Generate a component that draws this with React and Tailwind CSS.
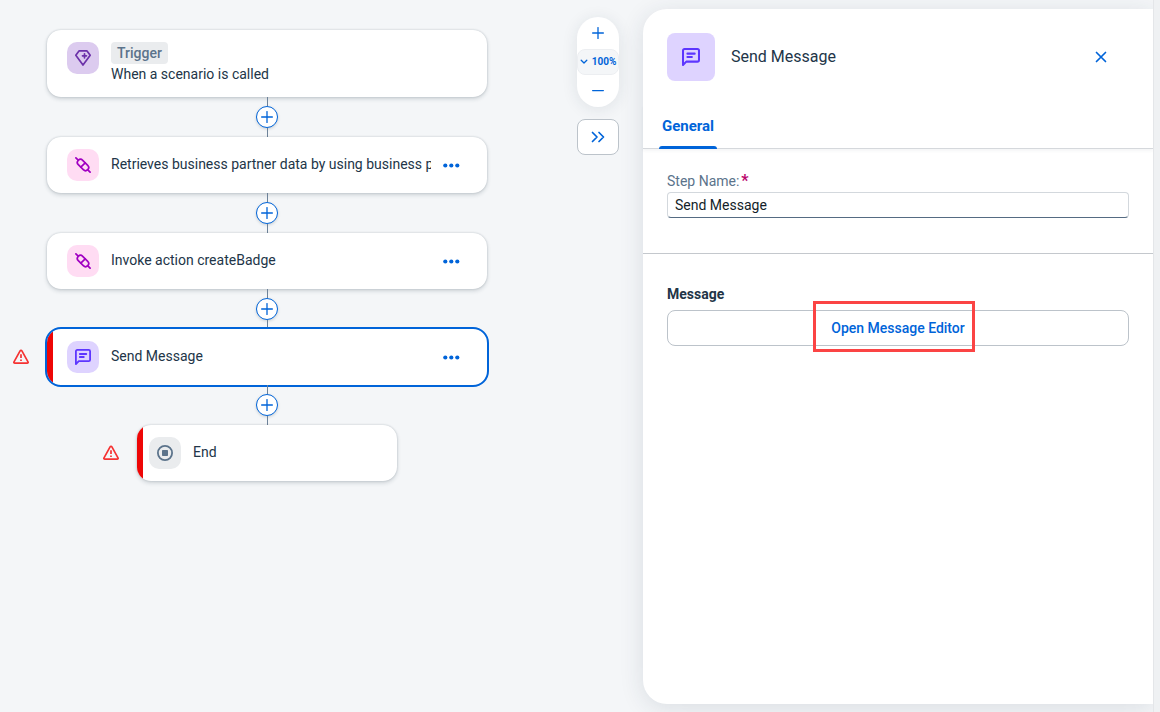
import React from "react";

function DiamondIcon() {
  return (
    <svg viewBox="0 0 16 16" className="h-4 w-4" fill="none" stroke="#6c32a9" strokeWidth="1.7" strokeLinejoin="round" strokeLinecap="round" aria-hidden="true">
      <path d="M4 .9h8L15.200 5.300 8 15.100.8 5.300z" />
      <path d="M9.500 3.800v4M7.500 5.800h4" />
    </svg>
  );
}

function PlugIcon() {
  return (
    <svg viewBox="0 0 16 16" className="h-4 w-4" fill="none" stroke="#a100c2" strokeWidth="1.700" strokeLinecap="round" strokeLinejoin="round" aria-hidden="true">
      <path d="M.9.9l2.300 2.300M12.800 12.800l2.300 2.300" />
      <path d="M3.300 7.700a3.100 3.100 0 0 1 4.400-4.400l5 5a3.100 3.100 0 0 1-4.400 4.400z" />
      <path d="M5.800 10.200l4.400-4.400" />
    </svg>
  );
}

function MessageIcon({ className = "h-4 w-4" }) {
  return (
    <svg viewBox="0 0 16 16" className={className} fill="none" stroke="#5d36ff" strokeWidth="1.800" strokeLinecap="round" strokeLinejoin="round" aria-hidden="true">
      <path d="M.9 15.100V2.300C.9 1.400 1.400.9 2.300.9h11.400c.9 0 1.400.5 1.400 1.400v8.400c0 .9-.5 1.400-1.400 1.400H3.800z" />
      <path d="M4.800 5h6.500M4.800 8h4" />
    </svg>
  );
}

function StopIcon() {
  return (
    <svg viewBox="0 0 16 16" className="h-4 w-4" aria-hidden="true">
      <circle cx="8" cy="8" r="7.100" fill="none" stroke="#5b738b" strokeWidth="1.800" />
      <rect x="5" y="5" width="6" height="6" rx=".8" fill="#5b738b" />
    </svg>
  );
}

function WarningIcon() {
  return (
    <svg viewBox="0 0 16 16" className="h-4 w-4" fill="none" stroke="#f53232" strokeWidth="1.700" strokeLinejoin="round" role="img" aria-label="Warning">
      <path d="M7.100 1.900c.4-.7 1.400-.7 1.800 0l6.100 10.900c.4.700-.1 1.400-.9 1.400H1.900c-.8 0-1.300-.7-.9-1.400z" />
      <path d="M8 5.300v3.700M8 10.500v1.500" />
    </svg>
  );
}

function PlusIcon() {
  return (
    <svg viewBox="0 0 12 12" className="h-3 w-3" stroke="#0064d9" strokeWidth="1.300" strokeLinecap="round" aria-hidden="true">
      <path d="M6 .6v10.800M.6 6h10.800" />
    </svg>
  );
}

const tiles = {
  trigger: "bg-[#dccbef]",
  action: "bg-[#ffdcf3]",
  message: "bg-[#ded3ff]",
  end: "bg-[#eaecee]",
};

function Tile({ kind, children }) {
  return (
    <span className={`flex h-8 w-8 shrink-0 items-center justify-center rounded-[10px] ${tiles[kind]}`}>
      {children}
    </span>
  );
}

function StepRow({ warning, children }) {
  return (
    <div className="grid w-full grid-cols-[1fr_auto_1fr] items-center">
      <div className="flex justify-end pr-[18px]">{warning && <WarningIcon />}</div>
      {children}
      <div />
    </div>
  );
}

function Step({ kind, icon, label, selected, error }) {
  return (
    <StepRow warning={error}>
      <article
        className={`flex h-14 w-[440px] overflow-hidden rounded-[14px] bg-white ${
          selected ? "outline-2 outline-[#0064d9]" : "shadow-[0_0_2px_rgba(34,53,72,0.24),0_2px_4px_rgba(34,53,72,0.18)]"
        }`}
      >
        <span className={`w-1.5 shrink-0 ${error ? "bg-[#ee0606]" : ""}`} />
        <div className="flex min-w-0 flex-1 items-center pr-6 pl-3.5">
          <Tile kind={kind}>{icon}</Tile>
          <p className="ml-3 min-w-0 flex-1 overflow-hidden pb-0.5 whitespace-nowrap">{label}</p>
          <button type="button" aria-label="More actions" className="ml-3 flex h-6 w-5 items-center">
            <svg viewBox="0 0 17 5" className="h-[5px] w-[17px]" fill="#0064d9" aria-hidden="true">
              <circle cx="2.300" cy="2.500" r="2.100" />
              <circle cx="8.300" cy="2.500" r="2.100" />
              <circle cx="14.300" cy="2.500" r="2.100" />
            </svg>
          </button>
        </div>
      </article>
    </StepRow>
  );
}

function Connector() {
  return (
    <div className="flex h-10 flex-col items-center">
      <span className="w-px flex-1 bg-[#6d8299]" />
      <button
        type="button"
        aria-label="Add step"
        className="flex h-[22px] w-[22px] items-center justify-center rounded-full border border-[#0064d9] bg-white shadow-[0_1px_3px_rgba(34,53,72,0.2)]"
      >
        <PlusIcon />
      </button>
      <span className="w-px flex-1 bg-[#6d8299]" />
    </div>
  );
}

function Flow() {
  return (
    <section aria-label="Process" className="w-[534px] shrink-0 pt-[30px]">
      <StepRow>
        <article className="flex w-[440px] rounded-[14px] bg-white px-5 py-3 shadow-[0_0_2px_rgba(34,53,72,0.24),0_2px_4px_rgba(34,53,72,0.18)]">
          <Tile kind="trigger">
            <DiamondIcon />
          </Tile>
          <div className="ml-3 h-[43px]">
            <span className="block w-fit rounded bg-[#eaecee] px-1.5 text-sm leading-[22px] font-medium text-[#5b738b]">
              Trigger
            </span>
            <p className="leading-[21px]">When a scenario is called</p>
          </div>
        </article>
      </StepRow>
      <Connector />
      <Step kind="action" icon={<PlugIcon />} label="Retrieves business partner data by using business pa" />
      <Connector />
      <Step kind="action" icon={<PlugIcon />} label="Invoke action createBadge" />
      <Connector />
      <Step kind="message" icon={<MessageIcon />} label="Send Message" selected error />
      <Connector />
      <StepRow warning>
        <article className="flex h-14 w-[260px] overflow-hidden rounded-[14px] bg-white shadow-[0_0_2px_rgba(34,53,72,0.24),0_2px_4px_rgba(34,53,72,0.18)]">
          <span className="w-1.5 shrink-0 bg-[#ee0606]" />
          <div className="flex items-center pl-1.5">
            <Tile kind="end">
              <StopIcon />
            </Tile>
            <p className="ml-3 pb-0.5">End</p>
          </div>
        </article>
      </StepRow>
    </section>
  );
}

function CanvasControls() {
  return (
    <div className="mr-6 ml-auto flex w-[42px] shrink-0 flex-col gap-3 pt-[17px] text-[#0064d9]">
      <div className="flex h-[90px] flex-col overflow-hidden rounded-[21px] bg-white shadow-[0_2px_16px_rgba(34,53,72,0.1)]">
        <button type="button" aria-label="Zoom in" className="flex h-8 items-center justify-center">
          <PlusIcon />
        </button>
        <button type="button" className="flex h-[26px] items-center justify-center gap-1 rounded-lg border border-[#eceef1] bg-[#f4f6f8] text-[10px] font-bold">
          <svg viewBox="0 0 8 6" className="h-1.5 w-2" fill="none" stroke="currentColor" strokeWidth="1.300" strokeLinecap="round" strokeLinejoin="round" aria-hidden="true">
            <path d="M1.200 1.200L4 4l2.800-2.800" />
          </svg>
          100%
        </button>
        <button type="button" aria-label="Zoom out" className="flex h-8 items-center justify-center">
          <svg viewBox="0 0 12 2" className="h-0.5 w-3" stroke="currentColor" strokeWidth="1.200" strokeLinecap="round" aria-hidden="true">
            <path d="M.6.6h10.800" />
          </svg>
        </button>
      </div>
      <button type="button" aria-label="Collapse panel" className="flex h-9 items-center justify-center rounded-lg border border-[#bcc3ca] bg-white">
        <svg viewBox="0 0 14 12" className="h-3 w-3.5" fill="none" stroke="currentColor" strokeWidth="1.700" strokeLinecap="round" strokeLinejoin="round" aria-hidden="true">
          <path d="M1.500 1.500L6 6l-4.500 4.500M8 1.500L12.500 6 8 10.500" />
        </svg>
      </button>
    </div>
  );
}

function DetailsPanel() {
  return (
    <aside className="mt-[9px] mb-2 w-[510px] shrink-0 rounded-l-3xl bg-white shadow-[0_4px_24px_rgba(34,53,72,0.12)]">
      <header className="flex items-center px-6 pt-6">
        <span className="flex h-12 w-12 items-center justify-center rounded-lg bg-[#ded3ff]">
          <MessageIcon className="h-[18px] w-[18px]" />
        </span>
        <h2 className="ml-4 flex-1 text-base">Send Message</h2>
        <button type="button" aria-label="Close" className="mr-2.5 flex h-9 w-9 items-center justify-center">
          <svg viewBox="0 0 12 12" className="h-3 w-3" fill="none" stroke="#0064d9" strokeWidth="1.700" strokeLinecap="round" aria-hidden="true">
            <path d="M1.500 1.500l9 9M10.500 1.500l-9 9" />
          </svg>
        </button>
      </header>

      <div role="tablist" className="mt-6 flex border-b border-[#d5d8dc] px-4 shadow-[0_2px_3px_rgba(34,53,72,0.05)]">
        <button type="button" role="tab" aria-selected="true" className="relative h-[43px] px-[3px] text-[15px] font-bold text-[#0064d9]">
          General
          <span className="absolute inset-x-0 -bottom-px h-[3px] rounded-t-sm bg-[#0064d9]" />
        </button>
      </div>

      <div className="border-b border-[#c4c8cd] px-6 pt-6 pb-[35px]">
        <label htmlFor="step-name" className="block h-[19px] leading-4 text-[#5b738b]">
          Step Name:<span className="ml-0.5 text-base leading-4 font-bold text-[#ba066c]">*</span>
        </label>
        <input
          id="step-name"
          type="text"
          defaultValue="Send Message"
          className="block h-[26px] w-full rounded border border-[#d3d8dd] border-b-[#556b82] bg-white px-[7px] text-sm text-[#131e29] outline-none"
        />
      </div>

      <div className="px-6 pt-[30px]">
        <h3 className="leading-5 font-bold">Message</h3>
        <div className="relative mt-1.5">
          <button type="button" className="block h-9 w-full rounded-lg border border-[#bcc3ca] bg-white font-medium text-[#0064d9]">
            Open Message Editor
          </button>
          <span className="pointer-events-none absolute -top-[9px] left-1/2 h-[51px] w-[162px] -translate-x-[85px] border-[3px] border-[#fb4444]" />
        </div>
      </div>
    </aside>
  );
}

export default function App() {
  return (
    <main className="flex min-h-screen bg-[#f4f6f8] font-['Roboto',sans-serif] text-sm text-[#223548]">
      <div className="flex min-w-0 flex-1">
        <Flow />
        <CanvasControls />
      </div>
      <DetailsPanel />
      <div className="z-10 w-[7px] shrink-0 border-l border-[#e4e6e9] bg-[#eff1f3]" />
    </main>
  );
}
